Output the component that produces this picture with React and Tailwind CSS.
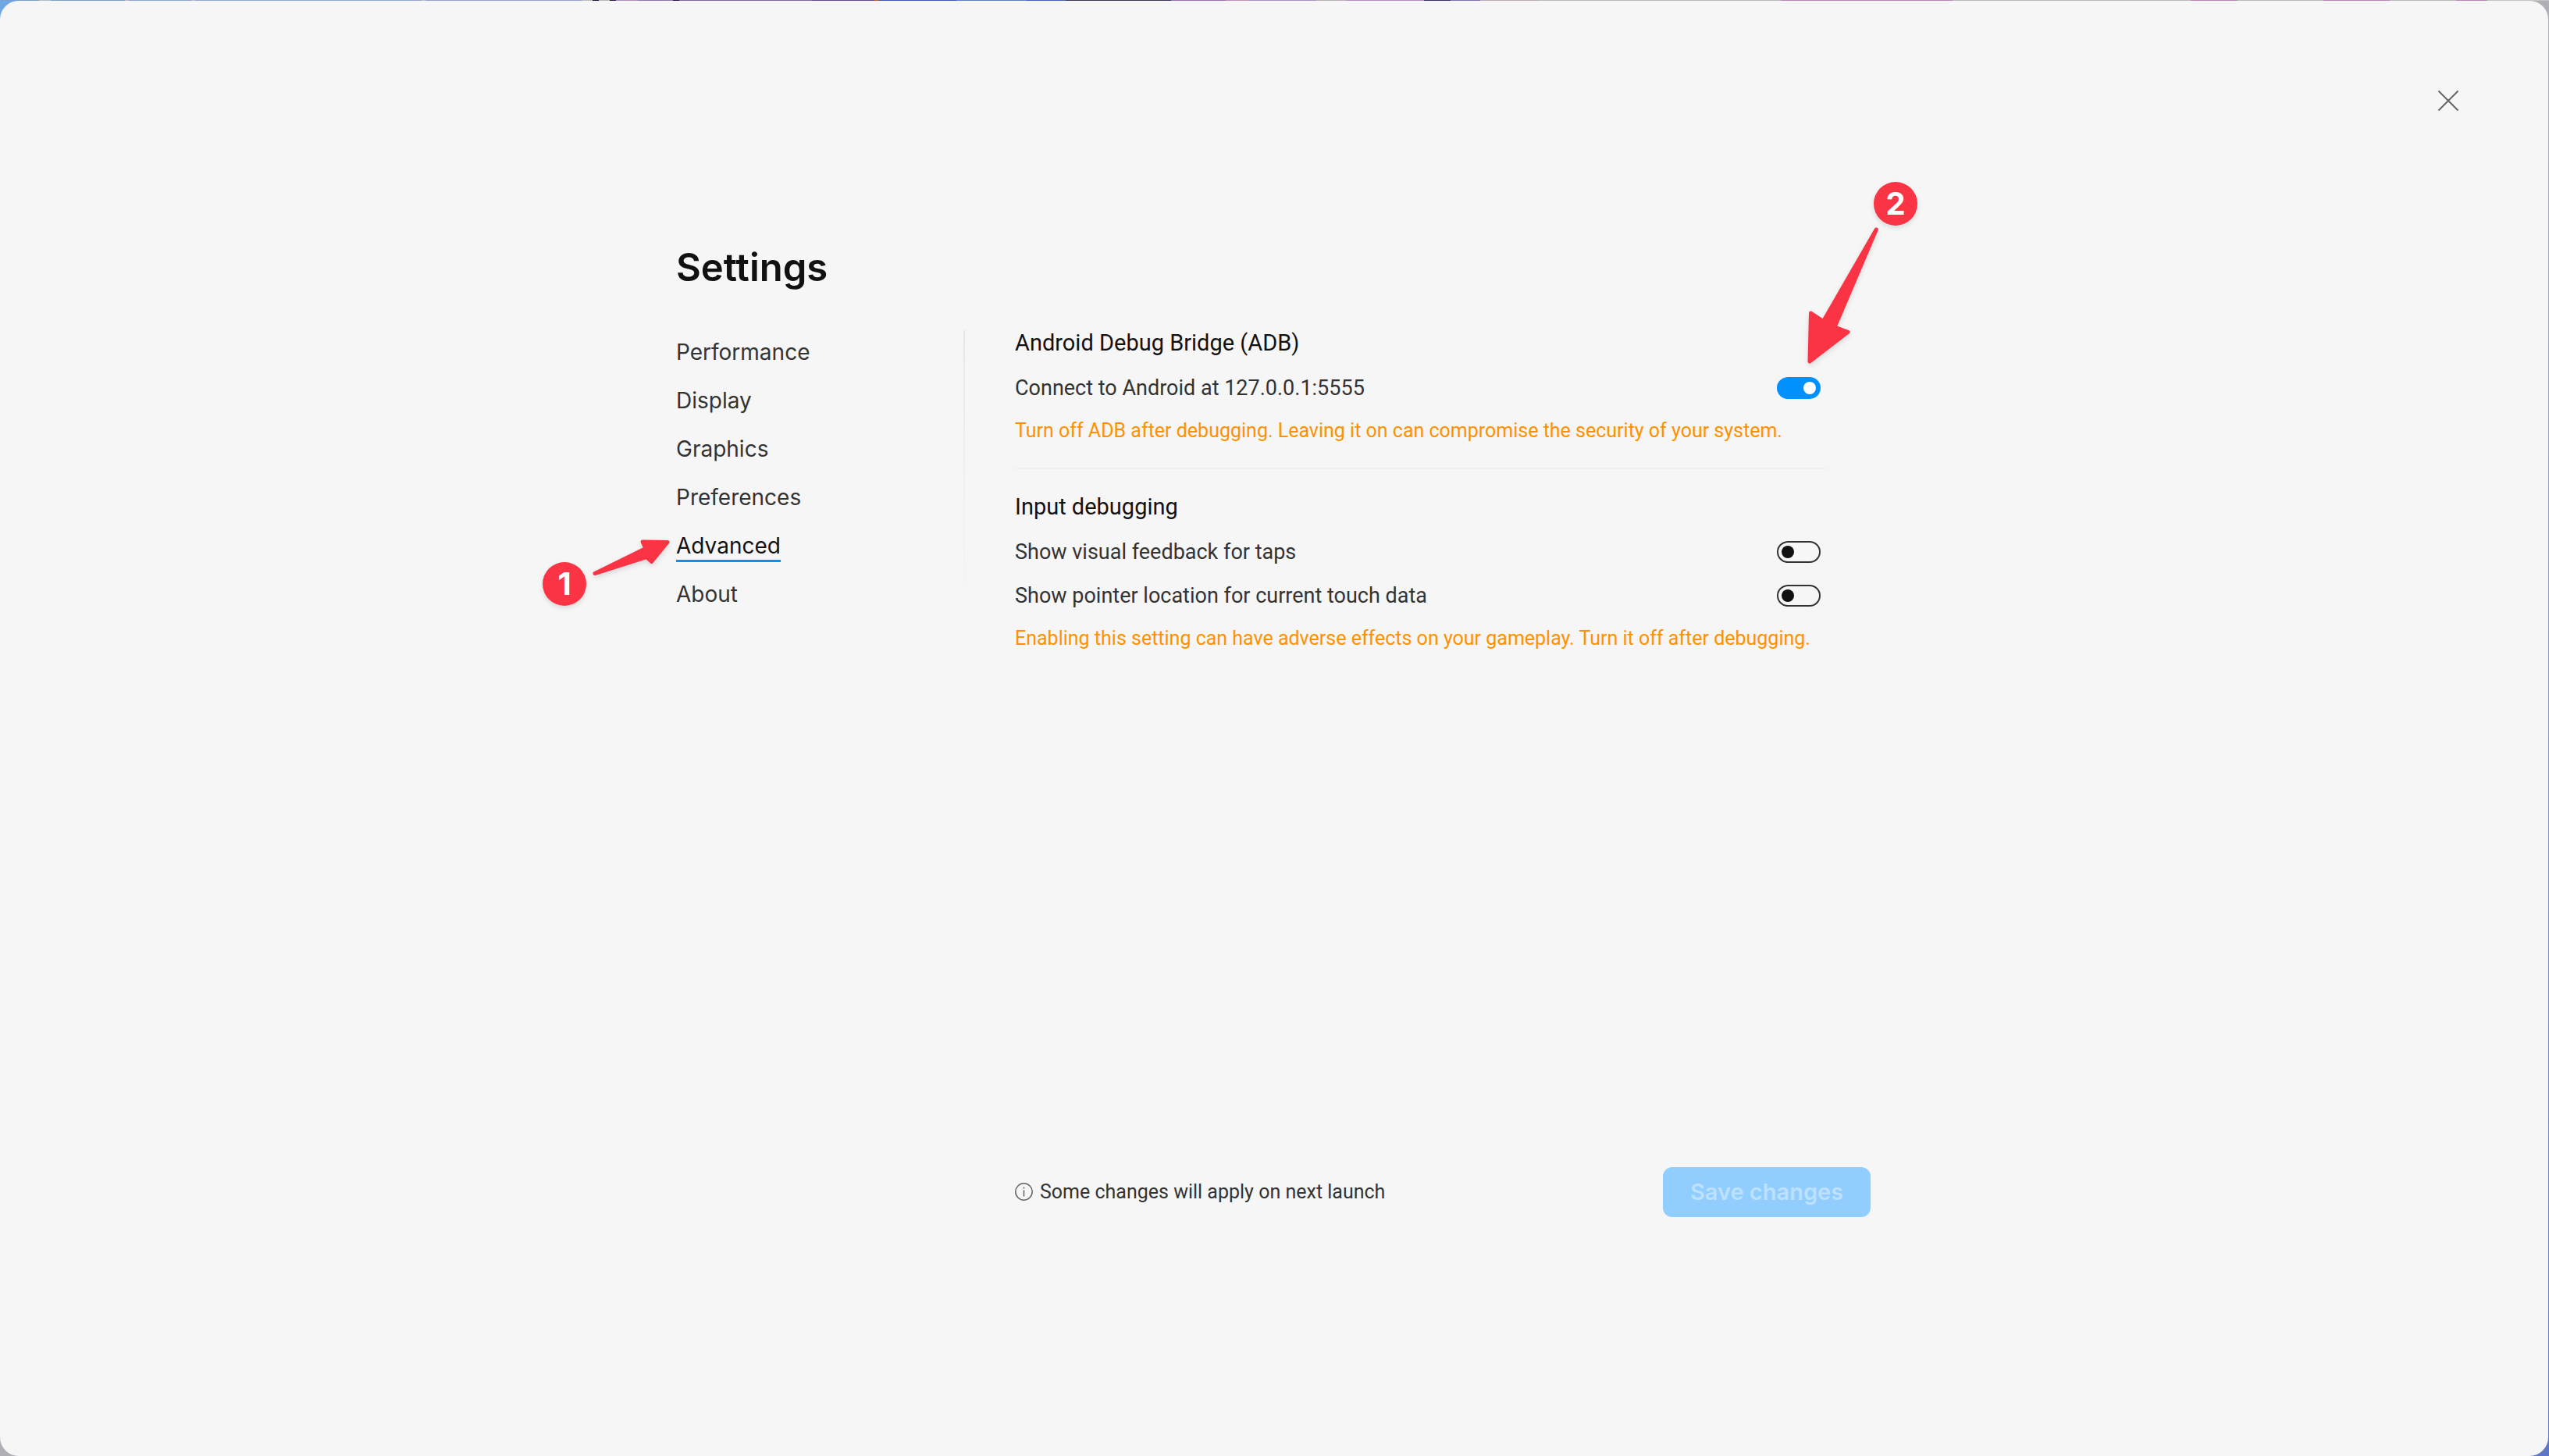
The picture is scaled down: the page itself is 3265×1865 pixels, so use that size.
import React, { useState } from 'react';

// Slices of the desktop wallpaper that stay visible above the window: [width share, colour]
const WALLPAPER = [
  [50, '#7ba0cf'], [15, '#b5bcc6'], [95, '#7d9fce'], [5, '#b8bcc6'], [80, '#86a4cf'], [5, '#b8bcc6'],
  [290, '#8fa5cf'], [5, '#c3bfc6'], [200, '#92a2ca'], [14, '#c0bab8'], [8, '#1d1038'], [14, '#b5b5b5'],
  [8, '#2b1450'], [28, '#b48cb8'], [45, '#9273b5'], [8, '#1f1040'], [170, '#7d63a0'], [80, '#64488f'],
  [5, '#c45a3a'], [100, '#3e58b0'], [90, '#5f80be'], [50, '#4560b4'], [135, '#3b3350'], [70, '#9a70bb'],
  [30, '#c090b8'], [86, '#a890c4'], [38, '#b8b0b4'], [100, '#b48cc0'], [34, '#3c2a68'], [38, '#8070b4'],
  [75, '#bca6b4'], [310, '#bab8b8'], [220, '#bd84b6'], [305, '#bab8b8'], [60, '#bd84b6'], [110, '#bab8b8'],
  [85, '#bd84b6'], [85, '#bab8b8'], [40, '#bd84b6'], [79, '#c6c4c4'],
];

const NAV = ['Performance', 'Display', 'Graphics', 'Preferences', 'Advanced', 'About'];

function Badge({ children, className }) {
  return (
    <span
      className={`absolute flex size-14 items-center justify-center rounded-full bg-[#fa3444] font-[Inter,sans-serif] text-[40px] font-bold leading-none text-white shadow-[0_3px_6px_rgba(0,0,0,0.12)] ${className}`}
    >
      {children}
    </span>
  );
}

function Arrow({ d, viewBox, className }) {
  return (
    <svg
      aria-hidden="true"
      viewBox={viewBox}
      className={`pointer-events-none absolute overflow-visible drop-shadow-[0_3px_3px_rgba(0,0,0,0.12)] ${className}`}
    >
      <path d={d} fill="#fa3444" stroke="#fa3444" strokeWidth="5" strokeLinejoin="round" />
    </svg>
  );
}

function ToggleRow({ id, label, initial = false, children }) {
  const [on, setOn] = useState(initial);
  return (
    <div className="flex h-14 items-center justify-between pr-2 text-[27px] text-[#333]">
      <label htmlFor={id}>{label}</label>
      <span className="relative flex">
        <input
          id={id}
          type="checkbox"
          role="switch"
          checked={on}
          onChange={(e) => setOn(e.target.checked)}
          className="flex h-7 w-14 cursor-pointer appearance-none items-center rounded-full border-2 border-[#333] px-1 before:size-4 before:rounded-full before:bg-[#111] checked:justify-end checked:border-[#0091ff] checked:bg-[#0091ff] checked:before:bg-white"
        />
        {children}
      </span>
    </div>
  );
}

function Section({ title, note, children }) {
  return (
    <section>
      <h2 className="mb-3.5 text-[29px] leading-8 text-[#111]">{title}</h2>
      {children}
      <p className="mt-[11px] text-[25px] leading-8 text-[#ff9100]">{note}</p>
    </section>
  );
}

export default function App() {
  const [active, setActive] = useState('Advanced');
  return (
    <div className="flex min-h-screen flex-col bg-linear-to-br from-[#6fa8e6] via-[#b0afb6] to-[#5f76c4] font-[Roboto,sans-serif]">
      <div className="flex h-px w-full">
        {WALLPAPER.map(([share, color], i) => (
          <span key={i} style={{ flexGrow: share, background: color }} />
        ))}
      </div>
      <main className="mr-px flex flex-1 flex-col rounded-[24px] bg-[#f6f6f6] pr-0.5 pb-[306px]">
        <header className="flex justify-end pt-[104px] pr-[102px]">
          <button type="button" aria-label="Close" className="flex size-12 items-center justify-center text-[#666]">
            <svg viewBox="0 0 26 26" className="size-[26px] overflow-visible" stroke="currentColor" strokeWidth="2" fill="none">
              <path d="M0.5 0.5 25.5 25.5M25.5 0.5 0.5 25.5" />
            </svg>
          </button>
        </header>

        <div className="mx-auto flex w-full max-w-[1530px] flex-1 flex-col pt-[160px]">
          <h1 className="font-[Inter,sans-serif] text-[49px] font-semibold leading-[60px] text-[#111]">Settings</h1>

          <div className="mt-[50px] flex">
            <nav className="flex w-[368px] shrink-0 flex-col items-start gap-[23px] pt-2.5 font-[Inter,sans-serif] text-[28px] leading-9 text-[#333]">
              {NAV.map((item) => (
                <a
                  key={item}
                  href={`#${item.toLowerCase()}`}
                  onClick={() => setActive(item)}
                  aria-current={item === active ? 'page' : undefined}
                  className="relative border-b-[3px] border-transparent aria-[current=page]:border-[#0091ff] aria-[current=page]:text-[#111]"
                >
                  {item}
                  {item === 'Advanced' && (
                    <>
                      <Badge className="top-[39px] -left-[171px]">1</Badge>
                      <Arrow
                        viewBox="756 686 106 54"
                        className="top-[5px] -left-[110px] h-[54px] w-[106px]"
                        d="M762 734.5 828 713.5 834.5 719.5 855 694.5 823 694 827 702.5Z"
                      />
                    </>
                  )}
                </a>
              ))}
            </nav>
            <div className="h-[365px] w-0.5 shrink-0 bg-linear-to-b from-[#e8e8e8] to-[#f6f6f6]" />
            <div className="ml-16 min-w-0 flex-1">
              <div className="max-w-[1040px]">
                <Section
                  title="Android Debug Bridge (ADB)"
                  note="Turn off ADB after debugging. Leaving it on can compromise the security of your system."
                >
                  <ToggleRow id="adb" label="Connect to Android at 127.0.0.1:5555" initial>
                    <Badge className="-top-[250px] left-[124px]">2</Badge>
                    <Arrow
                      viewBox="2310 286 100 184"
                      className="-top-[197px] left-[34px] h-[184px] w-[100px]"
                      d="M2403.3 294 2350 419 2367 425.3 2318 463 2319.5 401 2335.5 411.5Z"
                    />
                  </ToggleRow>
                </Section>
                <hr className="mt-[31px] mb-8 border-t-2 border-[#f0f0f0]" />
                <Section
                  title="Input debugging"
                  note="Enabling this setting can have adverse effects on your gameplay. Turn it off after debugging."
                >
                  <ToggleRow id="taps" label="Show visual feedback for taps" />
                  <ToggleRow id="pointer" label="Show pointer location for current touch data" />
                </Section>
              </div>
            </div>
          </div>

          <footer className="mt-auto flex items-center justify-between pl-[434px]">
            <p className="flex items-center gap-2 text-[25px] leading-8 text-[#333]">
              <svg aria-hidden="true" viewBox="0 0 24 24" className="size-6" fill="none" stroke="#666" strokeWidth="1.5">
                <circle cx="11.5" cy="11.5" r="10.7" />
                <path d="M11.5 9.5V17.5M11.5 5.5V7.5" />
              </svg>
              Some changes will apply on next launch
            </p>
            <button
              type="button"
              disabled
              className="h-16 w-[266px] rounded-xl bg-[#91ceff] font-[Inter,sans-serif] text-[29px] font-semibold text-[#bde1ff]"
            >
              Save changes
            </button>
          </footer>
        </div>
      </main>
    </div>
  );
}
